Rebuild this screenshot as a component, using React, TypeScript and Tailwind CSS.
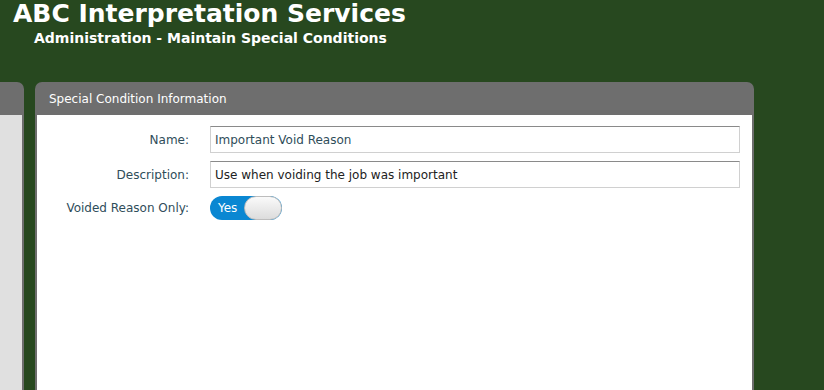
export default function App() {
  return (
    <div className="h-[390px] w-[824px] overflow-hidden bg-[#27481f] font-['DejaVu_Sans',sans-serif]">
      <div className="px-[13px]">
        <h1 className="text-[25px] font-bold leading-[28px] text-white">ABC Interpretation Services</h1>
        <p className="pl-[21px] text-[14px] font-bold leading-[20px] text-white">
          Administration - Maintain Special Conditions
        </p>
      </div>

      <div className="mt-[34px] flex gap-[11px]">
        {/* collapsed side panel */}
        <div className="flex h-[320px] w-[24px] flex-col overflow-hidden rounded-tr-[7px] bg-[#6e6e6e]">
          <div className="h-[33px] shrink-0" />
          <div className="mr-[2px] flex-1 bg-[#e0e0e0]" />
        </div>

        <div className="flex h-[320px] w-[719px] flex-col overflow-hidden rounded-t-[7px] bg-[#6e6e6e]">
          <div className="flex h-[33px] shrink-0 items-center px-[14px] text-[12px] text-white">
            Special Condition Information
          </div>
          <div className="mx-[2px] flex-1 bg-white pt-[11px]">
            <div className="grid grid-cols-[152px_1fr] items-center gap-x-[21px] gap-y-[8px] pr-[12px] text-[12px] text-[#2f4d5a]">
              <label className="text-right">Name:</label>
              <div className="flex h-[27px] items-center border border-[#d0d0d0] border-t-[#8a8a8a] px-[4px] text-[#2f4d5a]">
                Important Void Reason
              </div>
              <label className="text-right">Description:</label>
              <div className="flex h-[27px] items-center border border-[#d0d0d0] border-t-[#8a8a8a] px-[4px] text-[#222]">
                Use when voiding the job was important
              </div>
              <label className="text-right">Voided Reason Only:</label>
              <div className="flex h-[24px] w-[72px] items-center rounded-full bg-[#0a87d2] pl-[8px]">
                <span className="text-[12px] text-white">Yes</span>
                <span className="ml-auto h-[24px] w-[38px] rounded-full border border-[#bdbdbd] bg-gradient-to-b from-[#fafafa] to-[#dcdcdc]" />
              </div>
            </div>
          </div>
        </div>
      </div>
    </div>
  );
}
